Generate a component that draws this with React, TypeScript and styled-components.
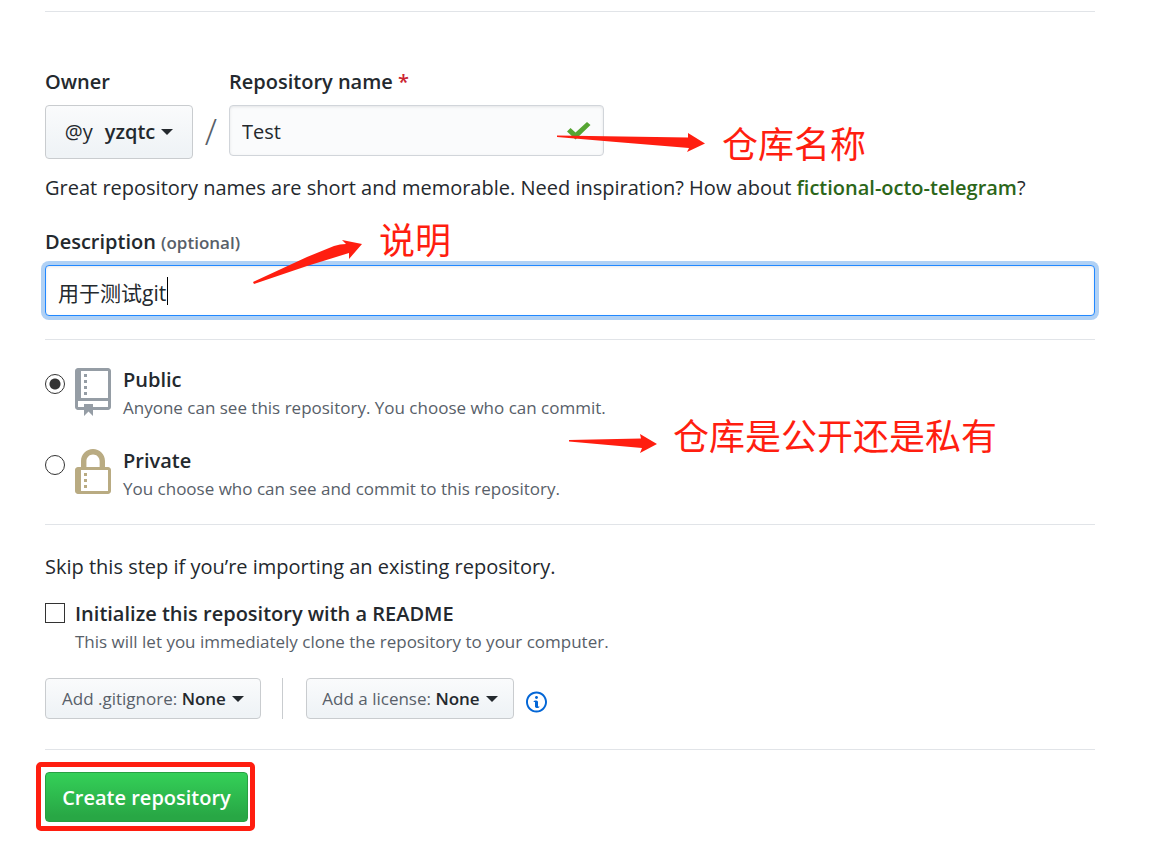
import React from "react";
import styled, { createGlobalStyle } from "styled-components";

const GlobalStyle = createGlobalStyle`
  * { box-sizing: border-box; }
  body {
    margin: 0;
    background: #fff;
    color: #24292e;
    font-family: "Open Sans", "Noto Sans CJK SC", sans-serif;
    font-size: 20px;
    line-height: 32px;
  }
  input, button { font: inherit; color: inherit; }
`;

const Page = styled.main`
  padding: 11px 55px 20px 45px;
`;

const Rule = styled.hr`
  height: 1px;
  margin: 0;
  border: 0;
  background: #e1e4e8;
`;

const Section = styled.section<{ $top: number; $bottom: number }>`
  position: relative;
  padding: ${(p) => p.$top}px 0 ${(p) => p.$bottom}px;
`;

const FieldRow = styled.div`
  display: flex;
  align-items: flex-start;
`;

const Field = styled.div`
  display: flex;
  flex-direction: column;
  align-items: flex-start;
  gap: 7px;
`;

const Label = styled.label`
  font-weight: 600;
`;

const Required = styled.span`
  color: #cb2431;
`;

const Optional = styled.span`
  font-size: 17px;
  line-height: 24px;
  color: #586069;
`;

const MenuButton = styled.button<{ $large?: boolean; $width: number }>`
  display: flex;
  align-items: center;
  justify-content: center;
  gap: 6px;
  width: ${(p) => p.$width}px;
  height: ${(p) => (p.$large ? 54 : 41)}px;
  padding: 0;
  border: 1px solid #c9cccf;
  border-radius: 4px;
  background: linear-gradient(#fafbfc, #eff3f6 90%);
  font-size: ${(p) => (p.$large ? 20 : 17)}px;
  font-weight: 600;
  white-space: nowrap;
`;

const Caret = styled.span`
  border: 6px solid transparent;
  border-top-color: #24292e;
  border-bottom: 0;
`;

const Avatar = styled.span`
  margin-right: 6px;
  font-weight: 500;
`;

const Muted = styled.span`
  font-weight: 400;
  color: #586069;
`;

const Slash = styled.span`
  width: 36px;
  padding-top: 39px;
  text-align: center;
  font-size: 36px;
  font-weight: 300;
  line-height: 54px;
  color: #586069;
`;

const InputWrap = styled.div<{ $width?: number }>`
  position: relative;
  width: ${(p) => (p.$width ? `${p.$width}px` : "100%")};
`;

const TextInput = styled.input<{ $active?: boolean }>`
  display: block;
  width: 100%;
  height: 51px;
  padding: 4px 12px 2px;
  border: 1px solid ${(p) => (p.$active ? "#2188ff" : "#d1d5da")};
  border-radius: 4px;
  outline: 0;
  background: ${(p) => (p.$active ? "#fff" : "#fafbfc")};
  box-shadow: inset 0 1px 3px rgba(27, 31, 35, 0.1)
    ${(p) => (p.$active ? ", 0 0 0 4px #b0d1f5" : "")};
  font-size: ${(p) => (p.$active ? 21 : 20)}px;
`;

const CheckIcon = styled.svg`
  position: absolute;
  top: 16px;
  right: 13px;
`;

const TextCursor = styled.span`
  position: absolute;
  top: 12px;
  left: 122px;
  width: 1px;
  height: 28px;
  background: #000;
`;

const Hint = styled.p`
  margin: 13px 0 22px;
`;

const Suggestion = styled.strong`
  font-weight: 600;
  color: #2c6619;
`;

const Options = styled.div`
  display: flex;
  flex-direction: column;
  gap: 25px;
`;

const Option = styled.label`
  display: flex;
  align-items: flex-start;
  gap: 10px;
`;

const OptionIcon = styled.svg<{ $color: string }>`
  width: 36px;
  height: 48px;
  margin: 4px 2px 0 0;
  fill: ${(p) => p.$color};
`;

const OptionText = styled.span`
  display: flex;
  flex-direction: column;
`;

const OptionTitle = styled.span`
  font-weight: 600;
`;

const OptionNote = styled.span`
  font-size: 17px;
  line-height: 24px;
  color: #586069;
`;

const Radio = styled.input`
  appearance: none;
  width: 20px;
  height: 20px;
  margin: 10px 0 0;
  border: 1px solid #333;
  border-radius: 50%;
  background: #fff;
  &:checked {
    background: radial-gradient(circle, #333 5px, #fff 6px);
  }
`;

const Checkbox = styled.input`
  appearance: none;
  width: 20px;
  height: 20px;
  margin: 5px 0 0;
  border: 1px solid #333;
  background: #fff;
`;

const Intro = styled.p`
  margin: 0 0 15px;
`;

const MenuRow = styled.div`
  display: flex;
  align-items: center;
  margin-top: 24px;
`;

const Divider = styled.span`
  width: 1px;
  height: 41px;
  margin: 0 23px 0 21px;
  background: #c9cccf;
`;

const InfoIcon = styled.svg`
  width: 21px;
  height: 24px;
  margin: 6px 0 0 12px;
  fill: #0366d6;
`;

const SubmitButton = styled.button`
  display: block;
  width: 203px;
  height: 50px;
  padding: 2px 0 0;
  border: 1px solid #28a043;
  border-radius: 4px;
  background: linear-gradient(#34d058, #28a745 90%);
  color: #fff;
  font-weight: 600;
`;

const Frame = styled.span`
  position: absolute;
  top: 12px;
  left: -9px;
  width: 219px;
  height: 69px;
  border: 5px solid #ff1e10;
  border-radius: 5px;
  pointer-events: none;
`;

const Note = styled.span<{ $x: number; $y: number }>`
  position: absolute;
  left: ${(p) => p.$x}px;
  top: ${(p) => p.$y}px;
  font-family: "Noto Sans CJK SC", sans-serif;
  font-size: 36px;
  line-height: 40px;
  white-space: nowrap;
  color: #ff1e10;
`;

const Arrow = styled.svg<{ $x: number; $y: number }>`
  position: absolute;
  left: ${(p) => p.$x}px;
  top: ${(p) => p.$y}px;
  fill: #ff1e10;
  pointer-events: none;
`;

export default function App() {
  return (
    <>
      <GlobalStyle />
      <Page>
        <Rule />
        <Section $top={54} $bottom={23}>
          <FieldRow>
            <Field>
              <Label htmlFor="owner">Owner</Label>
              <MenuButton id="owner" type="button" aria-haspopup="menu" $large $width={148}>
                <Avatar>@y</Avatar>
                yzqtc
                <Caret />
              </MenuButton>
            </Field>
            <Slash>/</Slash>
            <Field>
              <Label htmlFor="name">
                Repository name <Required>*</Required>
              </Label>
              <InputWrap $width={375}>
                <TextInput id="name" type="text" defaultValue="Test" />
                <CheckIcon width="24" height="20" viewBox="0 0 24 20">
                  <path d="M0 10.5L3.5 7L8.500 11.500L20 1L23.500 4L8.500 18.500Z" fill="#55a532" />
                </CheckIcon>
              </InputWrap>
            </Field>
          </FieldRow>
          <Hint>
            Great repository names are short and memorable. Need inspiration? How about{" "}
            <Suggestion>fictional-octo-telegram</Suggestion>?
          </Hint>
          <Field>
            <Label htmlFor="description">
              Description <Optional>(optional)</Optional>
            </Label>
            <InputWrap>
              <TextInput id="description" type="text" defaultValue="用于测试git" $active />
              <TextCursor />
            </InputWrap>
          </Field>
          <Arrow $x={511} $y={120} width="150" height="34">
            <path d="M1 3.500L132 5.500L132 1L149 11.500L131 20L133 16L60 10L1 5Z" />
          </Arrow>
          <Note $x={677} $y={110}>仓库名称</Note>
          <Arrow $x={207} $y={227} width="112" height="46">
            <path d="M1 43L55 18L82 7Q88 5 94 5L90 1L110 5L97 20L97 14L55 27L2 45Z" />
          </Arrow>
          <Note $x={334} $y={206}>说明</Note>
        </Section>
        <Rule />
        <Section $top={24} $bottom={23}>
          <Options>
            <Option>
              <Radio type="radio" name="visibility" defaultChecked />
              <OptionIcon viewBox="0 0 12 16" $color="#959da5">
                <path d="M4 9H3V8h1v1zm0-3H3v1h1V6zm0-2H3v1h1V4zm0-2H3v1h1V2zm8-1v12c0 .55-.45 1-1 1H6v2l-1.500-1.500L3 16v-2H1c-.55 0-1-.45-1-1V1c0-.55.45-1 1-1h10c.55 0 1 .45 1 1zm-1 10H1v2h2v-1h3v1h5v-2zm0-10H2v9h9V1z" />
              </OptionIcon>
              <OptionText>
                <OptionTitle>Public</OptionTitle>
                <OptionNote>
                  Anyone can see this repository. You choose who can commit.
                </OptionNote>
              </OptionText>
            </Option>
            <Option>
              <Radio type="radio" name="visibility" />
              <OptionIcon viewBox="0 0 12 16" $color="#b9ab82">
                <path d="M4 13H3v-1h1v1zm8-6v7c0 .55-.45 1-1 1H1c-.55 0-1-.45-1-1V7c0-.55.45-1 1-1h1V4c0-2.200 1.800-4 4-4s4 1.800 4 4v2h1c.55 0 1 .45 1 1zM3.800 6h4.410V4c0-1.220-.98-2.200-2.200-2.200-1.220 0-2.200.98-2.200 2.200v2H3.800zM11 7H2v7h9V7zM4 8H3v1h1V8zm0 2H3v1h1v-1z" />
              </OptionIcon>
              <OptionText>
                <OptionTitle>Private</OptionTitle>
                <OptionNote>You choose who can see and commit to this repository.</OptionNote>
              </OptionText>
            </Option>
          </Options>
          <Arrow $x={523} $y={93} width="90" height="22">
            <path d="M1 7L73 5.500L72 1L89 11L72 20L74 15L1 8.500Z" />
          </Arrow>
          <Note $x={628} $y={74}>仓库是公开还是私有</Note>
        </Section>
        <Rule />
        <Section $top={26} $bottom={30}>
          <Intro>Skip this step if you’re importing an existing repository.</Intro>
          <Option>
            <Checkbox type="checkbox" />
            <OptionText>
              <OptionTitle>Initialize this repository with a README</OptionTitle>
              <OptionNote>
                This will let you immediately clone the repository to your computer.
              </OptionNote>
            </OptionText>
          </Option>
          <MenuRow>
            <MenuButton type="button" aria-haspopup="menu" $width={216}>
              <span>
                <Muted>Add .gitignore:</Muted> None
              </span>
              <Caret />
            </MenuButton>
            <Divider />
            <MenuButton type="button" aria-haspopup="menu" $width={208}>
              <span>
                <Muted>Add a license:</Muted> None
              </span>
              <Caret />
            </MenuButton>
            <InfoIcon viewBox="0 0 14 16">
              <path d="M6.300 5.690a.942.942 0 0 1-.28-.7c0-.28.09-.52.28-.7.19-.18.42-.28.7-.28.28 0 .52.09.7.28.18.19.28.42.28.7 0 .28-.09.52-.28.7a1 1 0 0 1-.7.3c-.28 0-.52-.11-.7-.3zM8 7.990c-.02-.25-.11-.48-.31-.69-.2-.19-.42-.3-.69-.31H6c-.27.02-.48.13-.69.31-.2.2-.3.44-.31.69h1v3c.02.27.11.5.31.69.2.2.42.31.69.31h1c.27 0 .48-.11.69-.31.2-.19.3-.42.31-.69H8V7.980v.01zM7 2.300c-3.140 0-5.700 2.540-5.700 5.680 0 3.140 2.560 5.700 5.700 5.700s5.700-2.550 5.700-5.700c0-3.150-2.560-5.690-5.700-5.690v.01zM7 .98c3.860 0 7 3.140 7 7s-3.140 7-7 7-7-3.120-7-7 3.140-7 7-7z" />
            </InfoIcon>
          </MenuRow>
        </Section>
        <Rule />
        <Section $top={22} $bottom={0}>
          <SubmitButton type="submit">Create repository</SubmitButton>
          <Frame />
        </Section>
      </Page>
    </>
  );
}
